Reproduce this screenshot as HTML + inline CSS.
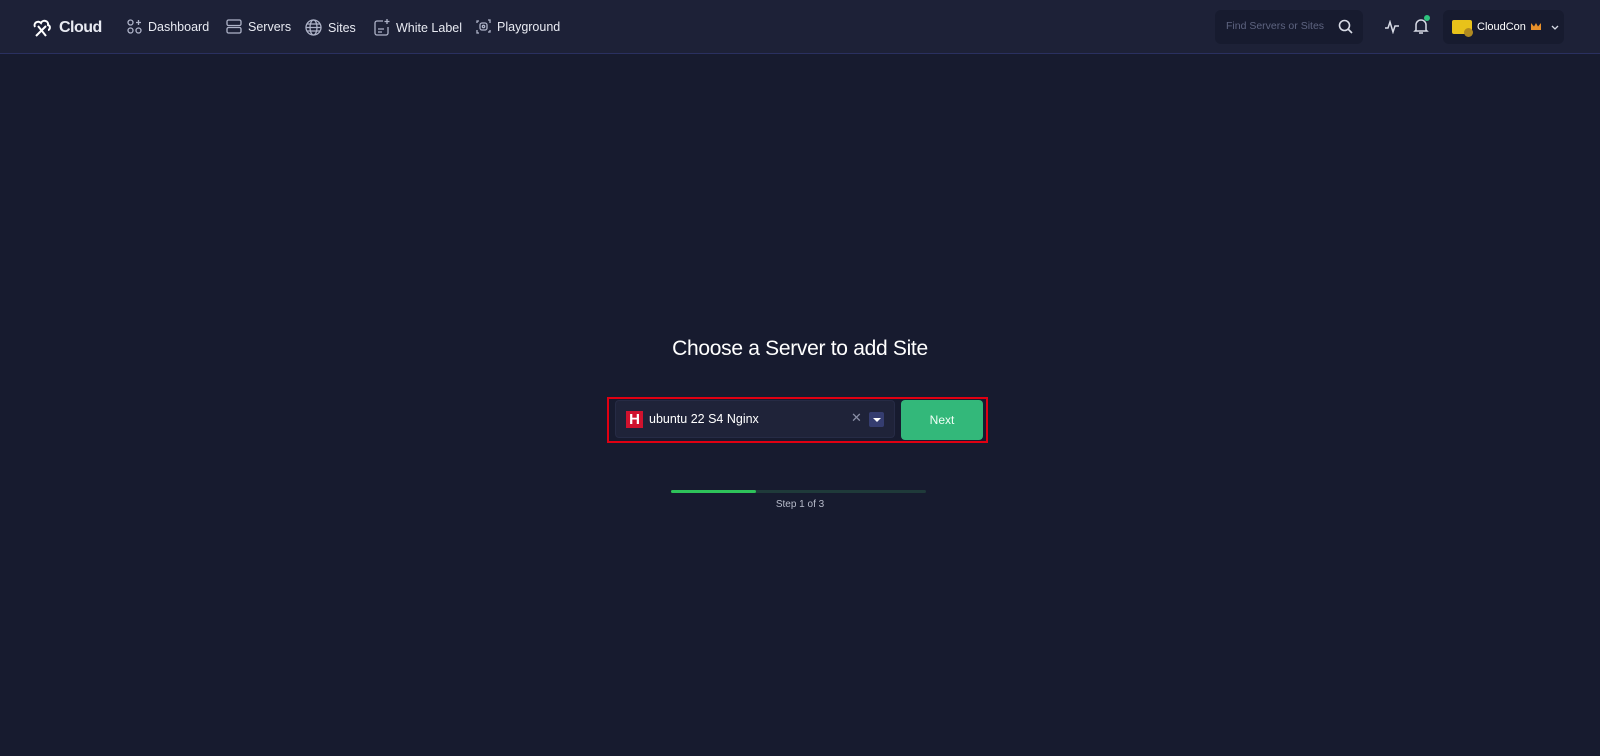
<!DOCTYPE html>
<html><head><style>
*{box-sizing:border-box;margin:0;padding:0}
body{width:1600px;height:756px;background:#171b2f;font-family:"Liberation Sans",sans-serif;color:#fff;overflow:hidden;position:relative}
.hdr{position:absolute;left:0;top:0;width:1600px;height:54px;background:#1d2137;border-bottom:1px solid #2a3060}
.nav{position:absolute;top:19px;font-size:12.5px;color:#e8eaf2;display:flex;align-items:center;gap:6px}
.nav svg{stroke:#aeb3c8;fill:none;stroke-width:1.3}
.search{position:absolute;left:1215px;top:10px;width:148px;height:34px;background:#171b2f;border-radius:6px;font-size:10.5px;color:#5e6480;padding:10px 11px}
.user{position:absolute;left:1443px;top:10px;width:121px;height:34px;background:#171b2f;border-radius:6px}
</style></head><body>
<div class="hdr">
 <div class="nav" style="left:31px;top:17px;font-size:16px;font-weight:bold;letter-spacing:-0.5px">
  <svg width="22" height="22" viewBox="0 0 22 22" style="stroke:#fff;stroke-width:2"><path d="M4 10c-2-4 3-7 6-4 2-4 8-2 7 2 3 1 2 5 0 5M5 19l10-10M7 9l8 10"/></svg>Cloud</div>
 <div class="nav" style="left:127px"><svg width="15" height="15" viewBox="0 0 15 15"><rect x="1" y="1" width="5" height="5" rx="2.5"/><rect x="1" y="9" width="5" height="5" rx="2.5"/><rect x="9" y="9" width="5" height="5" rx="2.5"/><path d="M11.5 1v5M9 3.5h5"/></svg>Dashboard</div>
 <div class="nav" style="left:226px"><svg width="16" height="15" viewBox="0 0 16 15"><rect x="1" y="1" width="14" height="5.5" rx="1.5"/><rect x="1" y="8.5" width="14" height="5.5" rx="1.5"/></svg>Servers</div>
 <div class="nav" style="left:305px"><svg width="17" height="17" viewBox="0 0 17 17"><circle cx="8.5" cy="8.5" r="7.5"/><ellipse cx="8.5" cy="8.5" rx="3.5" ry="7.5"/><path d="M1 8.5h15M2 5h13M2 12h13"/></svg>Sites</div>
 <div class="nav" style="left:374px"><svg width="16" height="17" viewBox="0 0 16 17"><path d="M9 2H3a2 2 0 0 0-2 2v10a2 2 0 0 0 2 2h9a2 2 0 0 0 2-2V8M4 10h6M4 13h4M13 0v5M10.5 2.5h5"/></svg>White Label</div>
 <div class="nav" style="left:476px"><svg width="15" height="15" viewBox="0 0 15 15"><path d="M1 4V2h2M12 1h2v3M14 11v2h-2M3 14H1v-3"/><rect x="4" y="4" width="7" height="7" rx="2"/><circle cx="7.5" cy="7.5" r="1.2"/></svg>Playground</div>
 <div class="search">Find Servers or Sites
  <svg width="15" height="15" viewBox="0 0 15 15" style="position:absolute;right:10px;top:9px;fill:none;stroke:#d8dbe6;stroke-width:1.6"><circle cx="6.5" cy="6.5" r="5"/><path d="M10 10l4 4"/></svg></div>
 <svg width="16" height="14" viewBox="0 0 16 14" style="position:absolute;left:1384px;top:20px;fill:none;stroke:#d8dbe6;stroke-width:1.5"><path d="M1 8h3l2-6 3 10 2-6h4"/></svg>
 <svg width="16" height="18" viewBox="0 0 16 18" style="position:absolute;left:1413px;top:17px;fill:none;stroke:#d8dbe6;stroke-width:1.5"><path d="M3 13V8a5 5 0 0 1 10 0v5l1 1H2zM6 16h4"/></svg>
 <div style="position:absolute;left:1424px;top:15px;width:6px;height:6px;border-radius:50%;background:#2ec27e"></div>
 <div class="user">
  <div style="position:absolute;left:9px;top:10px;width:20px;height:14px;background:#e8c21a;border-radius:2px"></div>
  <div style="position:absolute;left:21px;top:18px;width:9px;height:9px;background:#b08a20;border-radius:50%"></div>
  <div style="position:absolute;left:34px;top:11px;font-size:11px;color:#fff">CloudCon</div>
  <div style="position:absolute;left:88px;top:13px;width:10px;height:7px;background:#e8902a;clip-path:polygon(0 0,30% 50%,50% 0,70% 50%,100% 0,100% 100%,0 100%)"></div>
  <svg width="8" height="5" viewBox="0 0 8 5" style="position:absolute;left:108px;top:15px;fill:none;stroke:#d8dbe6;stroke-width:1.3"><path d="M1 1l3 3 3-3"/></svg>
 </div>
</div>
<div style="position:absolute;left:0;width:1600px;top:337px;text-align:center;font-size:21px;color:#fff;letter-spacing:-0.3px">Choose a Server to add Site</div>
<div style="position:absolute;left:607px;top:397px;width:381px;height:46px;border:2.5px solid #e00012"></div>
<div style="position:absolute;left:615px;top:400px;width:280px;height:38px;background:#1f2339;border-radius:4px;border:1px solid #262b45"></div>
<div style="position:absolute;left:626px;top:411px;width:17px;height:17px;background:#d0122e;color:#fff;font-weight:bold;font-size:15px;line-height:17px;text-align:center">H</div>
<div style="position:absolute;left:649px;top:412px;font-size:12.5px;color:#fff">ubuntu 22 S4 Nginx</div>
<div style="position:absolute;left:851px;top:410px;font-size:13px;color:#8a8fa6">✕</div>
<div style="position:absolute;left:869px;top:412px;width:15px;height:15px;background:#353d70;border-radius:2px"><div style="margin:6px auto 0;width:0;height:0;border-left:4px solid transparent;border-right:4px solid transparent;border-top:4px solid #fff"></div></div>
<div style="position:absolute;left:901px;top:400px;width:82px;height:40px;background:#33b87a;border-radius:4px;font-size:12px;text-align:center;line-height:40px;color:#f0fff6">Next</div>
<div style="position:absolute;left:671px;top:490px;width:255px;height:3px;background:#1f3a3a;border-radius:2px"></div>
<div style="position:absolute;left:671px;top:490px;width:85px;height:3px;background:#2ec25a;border-radius:2px"></div>
<div style="position:absolute;left:0;width:1600px;top:499px;text-align:center;font-size:10px;color:#b8bccb">Step 1 of 3</div>
</body></html>
